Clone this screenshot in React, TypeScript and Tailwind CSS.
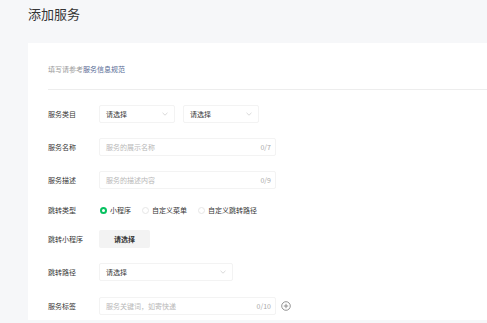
import React from 'react';

const font = { fontFamily: '"Noto Sans CJK SC", "Noto Sans", sans-serif' };

const Chevron = () => (
  <svg width="6" height="4" viewBox="0 0 6 4" fill="none" className="shrink-0">
    <path d="M0.5 0.8 L3 3.2 L5.5 0.8" stroke="#cfcfcf" strokeWidth="0.8" />
  </svg>
);

const Select: React.FC<{ w: string }> = ({ w }) => (
  <div className={`${w} h-[18px] flex items-center justify-between pl-[6px] pr-[6px] border border-[#f3f3f3] rounded-[2px] text-[7px] leading-none text-[#353535]`}>
    <span>请选择</span>
    <Chevron />
  </div>
);

const Input: React.FC<{ placeholder: string; count: string }> = ({ placeholder, count }) => (
  <div className="w-[177px] h-[18px] flex items-center justify-between pl-[6px] pr-[4px] border border-[#f3f3f3] rounded-[2px] text-[7px] leading-none">
    <span className="text-[#b8b8b8]">{placeholder}</span>
    <span className="text-[#a8a8a8]">{count}</span>
  </div>
);

const Row: React.FC<{ label: string; className?: string; children: React.ReactNode }> = ({ label, className = '', children }) => (
  <div className={`flex items-center h-[18px] ${className}`}>
    <div className="w-[51px] text-[7px] leading-none text-[#353535]">{label}</div>
    <div className="flex items-center">{children}</div>
  </div>
);

const Radio: React.FC<{ checked?: boolean; label: string }> = ({ checked, label }) => (
  <div className="flex items-center mr-[11px]">
    <span
      className={`w-[7px] h-[7px] rounded-full ${checked ? 'border-[2px] border-[#07c160]' : 'border border-[#e6e6e6]'} bg-white`}
    />
    <span className="ml-[3px] text-[7px] leading-none text-[#353535]">{label}</span>
  </div>
);

export default function App() {
  return (
    <div style={font} className="w-[487px] h-[323px] overflow-hidden bg-[#f6f7f9] relative">
      <h1 className="pl-[28px] pt-[6px] h-[43px] text-[13px] leading-[16px] text-[#353535] font-normal">添加服务</h1>
      <div className="ml-[28px] h-[277px] bg-white pl-[20px] pt-[22px]">
        <p className="text-[7px] leading-[9px] text-[#9a9a9a]">
          填写请参考<span className="text-[#576b95]">服务信息规范</span>
        </p>
        <div className="mt-[15px] h-px bg-[#ededed]" />

        <Row label="服务类目" className="mt-[15px]">
          <Select w="w-[76px]" />
          <div className="w-[8px]" />
          <Select w="w-[76px]" />
        </Row>
        <Row label="服务名称" className="mt-[15px]">
          <Input placeholder="服务的展示名称" count="0/7" />
        </Row>
        <Row label="服务描述" className="mt-[15px]">
          <Input placeholder="服务的描述内容" count="0/9" />
        </Row>
        <Row label="跳转类型" className="mt-[12px]">
          <div className="flex items-center pl-[1px]">
            <Radio checked label="小程序" />
            <Radio label="自定义菜单" />
            <Radio label="自定义跳转路径" />
          </div>
        </Row>
        <Row label="跳转小程序" className="mt-[11px]">
          <div className="w-[51px] h-[18px] flex items-center justify-center bg-[#f3f3f3] rounded-[2px] text-[7px] leading-none font-semibold text-[#353535]">
            请选择
          </div>
        </Row>
        <Row label="跳转路径" className="mt-[15px]">
          <Select w="w-[134px]" />
        </Row>
        <Row label="服务标签" className="mt-[16px]">
          <Input placeholder="服务关键词，如寄快递" count="0/10" />
          <svg width="10" height="10" viewBox="0 0 10 10" fill="none" className="ml-[5px]">
            <circle cx="5" cy="5" r="4.3" stroke="#7a7a7a" strokeWidth="0.8" />
            <path d="M5 2.8 V7.2 M2.8 5 H7.2" stroke="#7a7a7a" strokeWidth="0.8" />
          </svg>
        </Row>
      </div>
    </div>
  );
}
